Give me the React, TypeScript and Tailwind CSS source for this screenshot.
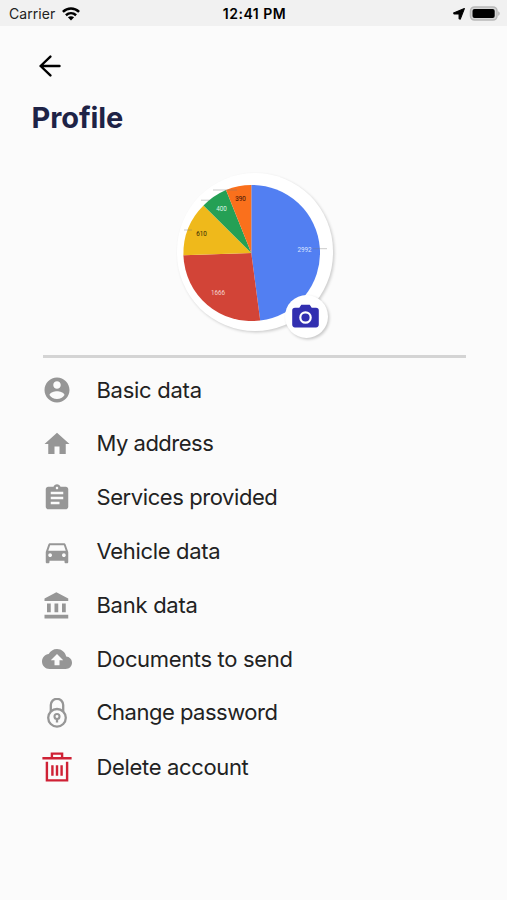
import type { ReactNode } from 'react';

function Glyph({ d }: { d: string }) {
  return (
    <svg viewBox="0 0 24 24" className="h-[30px] w-[30px]" fill="currentColor">
      <path d={d} />
    </svg>
  );
}

function LockIcon() {
  return (
    <svg viewBox="0 0 30 30" className="h-[30px] w-[30px]" fill="none" stroke="currentColor" strokeWidth="2.3">
      <circle cx="15" cy="19.8" r="8.8" />
      <path d="M8.8 13.4V7a6.2 6.2 0 0 1 12.4 0v6.4" />
      <circle cx="15" cy="18.5" r="2.5" strokeWidth="2.1" />
      <path d="M15 20.2v4.3" strokeWidth="2.3" />
    </svg>
  );
}

function TrashIcon() {
  return (
    <svg viewBox="0 0 30 30" className="h-[30px] w-[30px]" fill="none" stroke="currentColor" strokeWidth="2.4">
      <path d="M.4 6.2h29.2M9.9 6.2V1.6h10.2v4.6M4.9 9.7v18.7h20.2V9.700M10.4 13.2v10.600M15 13.2v10.600M19.600 13.2v10.600" />
    </svg>
  );
}

const items: { label: string; icon: ReactNode; text: string; color?: string }[] = [
  {
    label: 'Basic data',
    text: 'tracking-[-0.27px]',
    icon: <Glyph d="M12 2C6.48 2 2 6.48 2 12s4.48 10 10 10 10-4.48 10-10S17.52 2 12 2zm0 3c1.66 0 3 1.34 3 3s-1.34 3-3 3-3-1.34-3-3 1.34-3 3-3zm0 14.2c-2.5 0-4.71-1.28-6-3.22.03-1.99 4-3.08 6-3.08 1.99 0 5.97 1.09 6 3.08-1.29 1.94-3.5 3.22-6 3.22z" />,
  },
  { label: 'My address', text: 'tracking-[-0.5px]', icon: <Glyph d="M10 20v-6h4v6h5v-8h3L12 3 2 12h3v8z" /> },
  {
    label: 'Services provided',
    text: 'tracking-[-0.42px]',
    icon: <Glyph d="M19 3h-4.18C14.4 1.84 13.3 1 12 1c-1.3 0-2.4.84-2.82 2H5c-1.1 0-2 .9-2 2v14c0 1.1.9 2 2 2h14c1.1 0 2-.9 2-2V5c0-1.1-.9-2-2-2zm-7 0c.55 0 1 .45 1 1s-.45 1-1 1-1-.45-1-1 .45-1 1-1zm2 14H7v-2h7v2zm3-4H7v-2h10v2zm0-4H7V7h10v2z" />,
  },
  {
    label: 'Vehicle data',
    text: 'tracking-[-0.33px]',
    icon: <Glyph d="M18.92 6.01C18.72 5.42 18.16 5 17.5 5h-11c-.66 0-1.21.42-1.42 1.01L3 12v8c0 .55.45 1 1 1h1c.55 0 1-.45 1-1v-1h12v1c0 .55.45 1 1 1h1c.55 0 1-.45 1-1v-8l-2.08-5.99zM6.5 16c-.83 0-1.5-.67-1.5-1.5S5.67 13 6.5 13s1.5.67 1.5 1.5S7.33 16 6.5 16zm11 0c-.83 0-1.5-.67-1.5-1.5s.67-1.5 1.5-1.5 1.5.67 1.5 1.5-.67 1.5-1.5 1.5zM5 11l1.5-4.5h11L19 11H5z" />,
  },
  {
    label: 'Bank data',
    text: 'tracking-[-0.27px]',
    icon: <Glyph d="M4 10v7h3v-7H4zm6 0v7h3v-7h-3zM2 22h19v-3H2v3zm14-12v7h3v-7h-3zm-4.5-9L2 6v2h19V6l-9.5-5z" />,
  },
  {
    label: 'Documents to send',
    text: 'tracking-[-0.34px]',
    icon: <Glyph d="M19.35 10.04C18.67 6.59 15.64 4 12 4 9.11 4 6.6 5.64 5.35 8.04 2.34 8.36 0 10.91 0 14c0 3.31 2.69 6 6 6h13c2.76 0 5-2.24 5-5 0-2.64-2.05-4.78-4.65-4.96zM14 13v4h-4v-4H7l5-5 5 5h-3z" />,
  },
  { label: 'Change password', text: 'tracking-[-0.5px]', icon: <LockIcon /> },
  { label: 'Delete account', text: 'tracking-[-0.34px] pt-[2px]', icon: <TrashIcon />, color: 'text-[#cf2135]' },
];

function StatusBar() {
  return (
    <header className="grid h-[26px] grid-cols-3 items-center bg-[#f1f1f1] pl-[9px] pr-[7px] text-[14px] leading-[26px] text-[#222]">
      <div className="flex items-center gap-[7px] pt-px">
        <span className="tracking-[0.05px]">Carrier</span>
        <svg viewBox="0 0 18 14" className="mb-px h-[14px] w-[18px]" fill="none" stroke="#000" strokeWidth="2.5">
          <path d="M.9 4.9C5.6.5 12.4.5 17.1 4.9M3.9 8.2c3-2.7 7.2-2.7 10.2 0" />
          <path d="M5.9 10.3c1.8-1.500 4.400-1.500 6.200 0L9 13.500z" fill="#000" stroke="none" />
        </svg>
      </div>
      <span className="whitespace-nowrap pt-px text-center font-semibold tracking-[0.5px] text-black">12:41 PM</span>
      <div className="flex items-center justify-end gap-[4px]">
        <svg viewBox="0 0 12 12" className="h-[12px] w-[12px]">
          <path d="M11.4.6 7.3 11.1 6.1 10.8V5.9H1L.6 4.9z" fill="#000" stroke="#000" strokeWidth="1.1" strokeLinejoin="round" />
        </svg>
        <svg viewBox="0 0 31 15" className="h-[15px] w-[31px]">
          <rect x="1.5" y=".9" width="26.5" height="13.2" rx="4" fill="#d5d5d5" stroke="#b8b8b8" strokeWidth="1.5" />
          <rect x="3.5" y="2.9" width="22.2" height="9.2" rx="2" fill="#000" />
          <path d="M29.200 5.200c2 .8 2 3.800 0 4.600z" fill="#b2b2b2" />
        </svg>
      </div>
    </header>
  );
}

function PieChart() {
  return (
    <svg viewBox="177 173 156 158" className="h-[158px] w-[156px]" fontFamily="Roboto, sans-serif" fontSize="6.3" textAnchor="middle">
      <path d="M251.3 253V185A68 68 0 0 1 260.2 320.5z" fill="#527ff2" />
      <path d="M251.3 253 260.2 320.5A68 68 0 0 1 183.4 255.3z" fill="#d24437" />
      <path d="M251.3 253 183.4 255.3A68 68 0 0 1 203.5 205.5z" fill="#efb91b" />
      <path d="M251.3 253 203.5 205.5A68 68 0 0 1 226 190z" fill="#25a055" />
      <path d="M251.3 253 226 190A68 68 0 0 1 251.3 185z" fill="#fa701c" />
      <path d="M213 190h24M201 200.2h9M184 230h8M313 248.7h14M208 300.5l2 2" stroke="#777" strokeOpacity=".5" strokeWidth=".8" fill="none" />
      <text x="304.5" y="251.5" fill="#dbe4ff">2992</text>
      <text x="218" y="294.7" fill="#f4d3cf">1666</text>
      <text x="201.5" y="235.6" fill="#4c3b08" stroke="#4c3b08" strokeWidth=".1">610</text>
      <text x="221.5" y="210.700" fill="#dcf5e5">400</text>
      <text x="240.5" y="200.5" fill="#572008" stroke="#572008" strokeWidth=".1">390</text>
    </svg>
  );
}

export default function App() {
  return (
    <div className="h-[900px] w-[507px] overflow-hidden bg-[#fbfbfb] font-[Inter,sans-serif]">
      <StatusBar />
      <main>
        <button aria-label="Back" className="ml-[38px] mt-[29px] block h-[22px] w-[23px]">
          <svg viewBox="0 0 23 22" className="h-[22px] w-[23px]" fill="none" stroke="#000" strokeWidth="2.4" strokeLinecap="round" strokeLinejoin="round">
            <path d="M12.4 1.6 2.6 11l9.8 9.4M2.6 11h18.9" />
          </svg>
        </button>
        <h1 className="ml-[31.5px] mt-[23px] h-[36px] text-[29px] font-bold leading-[36px] tracking-[-0.1px] text-[#1e2346]">Profile</h1>
        <div className="relative ml-[177px] mt-[37px] h-[158px] w-[156px]">
          <div className="h-full w-full overflow-hidden rounded-full bg-white shadow-[1.5px_1.5px_3px_rgba(0,0,0,0.18)]">
            <PieChart />
          </div>
          <button aria-label="Change photo" className="absolute left-[107.5px] top-[122px] flex h-[43px] w-[43px] items-center justify-center rounded-full bg-white shadow-[1.5px_1.5px_3px_rgba(0,0,0,0.2)]">
            <svg viewBox="0 0 27 24" className="mb-px mr-px h-[24px] w-[27px]">
              <path d="M9.3.8h8.4l2 3H24a2.8 2.8 0 0 1 2.8 2.8v14A2.8 2.8 0 0 1 24 23.4H3A2.8 2.8 0 0 1 .2 20.6v-14A2.8 2.8 0 0 1 3 3.8h4.3z" fill="#322fb0" />
              <circle cx="13.5" cy="13.5" r="5.2" fill="none" stroke="#fff" strokeWidth="2.2" />
            </svg>
          </button>
        </div>
        <div className="ml-[42.5px] mt-[24px] h-[3px] w-[423px] bg-[#d4d4d4]" />
        <ul className="ml-[42px] mt-[5.5px]">
          {items.map((item) => (
            <li key={item.label} className="flex h-[53.8px] items-center gap-[24.5px]">
              <span className={item.color ?? 'text-[#969696]'}>{item.icon}</span>
              <span className={`mb-[1.5px] whitespace-nowrap text-[22px] leading-[28px] text-[#222] ${item.text}`}>{item.label}</span>
            </li>
          ))}
        </ul>
      </main>
    </div>
  );
}
